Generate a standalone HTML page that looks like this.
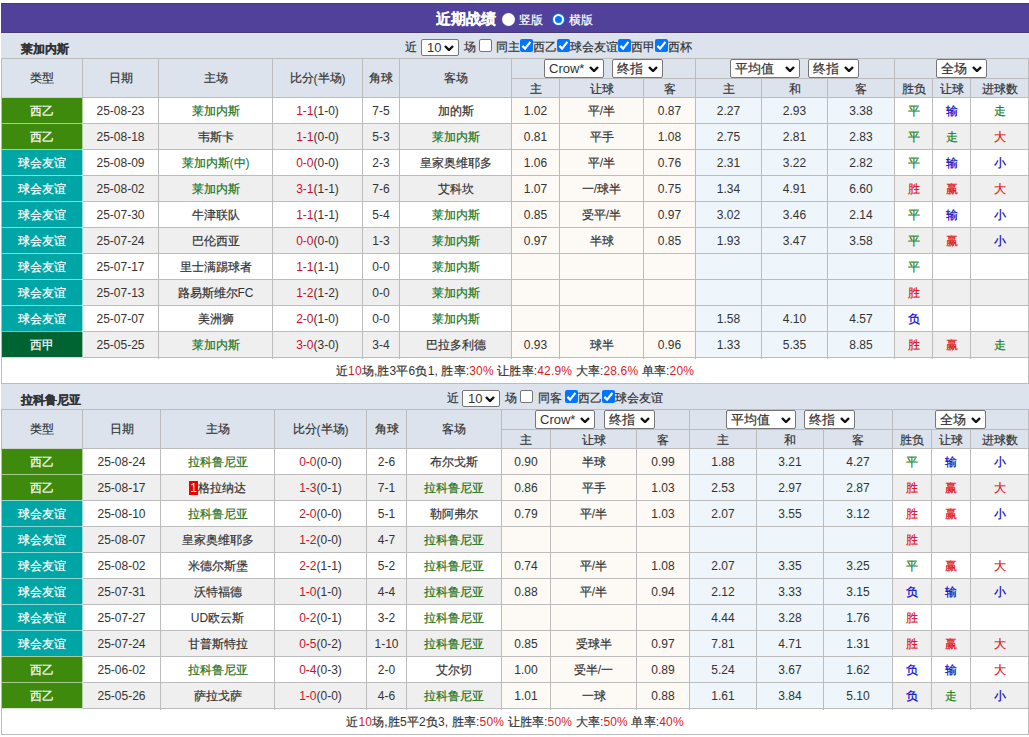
<!DOCTYPE html><html><head><meta charset="utf-8"><style>
html,body{margin:0;padding:0;background:#fff;}
body{width:1029px;height:737px;position:relative;overflow:hidden;font-family:"Liberation Sans",sans-serif;font-size:12px;color:#333;}
.r{position:absolute;}
.t{position:absolute;white-space:nowrap;}
.b{font-weight:bold;}
.c{position:absolute;box-sizing:border-box;padding-top:1px;display:flex;align-items:center;justify-content:center;white-space:nowrap;font-size:12px;}
.hd{color:#333;}
.cb{position:absolute;width:11px;height:11px;border:1px solid #767676;border-radius:2px;background:#fff;}
.cb.on{width:13px;height:13px;border:none;background:#0075ff;}
.cb svg{position:absolute;left:0;top:0;}
.sel{position:absolute;border:1px solid #767676;border-radius:2px;background:#fff;}
.red{color:#c8102e;}
.k{font-style:normal;-webkit-text-stroke:0.2px currentColor;}
.fr{color:#d41c1c;}
</style></head><body>

<div class="r" style="left:1px;top:3px;width:1028px;height:30px;background:#51419b;"></div>
<div class="r" style="left:1px;top:3px;width:1028px;height:1px;background:#45397c;"></div>
<div class="r" style="left:1px;top:32px;width:1028px;height:1px;background:#45397c;"></div>
<div class="t b" style="left:436px;top:3px;height:30px;line-height:31px;font-size:15px;color:#fff"><i class="k">近期战绩</i></div>
<div class="r" style="left:502px;top:13px;width:13px;height:13px;border-radius:50%;background:#fff"></div>
<div class="t" style="left:519px;top:5px;height:30px;line-height:31px;font-size:12px;color:#fff"><i class="k">竖版</i></div>
<div class="r" style="left:553px;top:14px;width:7px;height:7px;border-radius:50%;background:#0075ff;border:2px solid #fff;box-shadow:0 0 0 1px #0075ff"></div>
<div class="t" style="left:569px;top:5px;height:30px;line-height:31px;font-size:12px;color:#fff"><i class="k">横版</i></div>
<div class="r" style="left:1px;top:33px;width:1028px;height:25px;background:#dce3ed;"></div>
<div class="t b" style="left:21px;top:33px;height:25px;line-height:32px;font-size:12px"><i class="k">莱加内斯</i></div>
<div class="t" style="left:405px;top:33px;height:25px;line-height:29px;font-size:12px"><i class="k">近</i></div>
<div class="sel" style="left:421px;top:39px;width:36px;height:15px"></div>
<div class="t" style="left:427px;top:39px;height:17px;line-height:17px;font-size:13px;font-family:"Liberation Serif",serif;">10</div>
<svg class="r" style="left:444px;top:44.5px" width="10" height="6" viewBox="0 0 10 6"><path d="M1 1 L5 5 L9 1" fill="none" stroke="#111" stroke-width="2.4"/></svg>
<div class="t" style="left:464px;top:33px;height:25px;line-height:29px;font-size:12px"><i class="k">场</i></div>
<div class="cb" style="left:479px;top:39px"></div>
<div class="t" style="left:496px;top:33px;height:25px;line-height:29px;font-size:12px"><i class="k">同主</i></div>
<div class="cb on" style="left:520px;top:39px"><svg width="13" height="13" viewBox="0 0 13 13"><path d="M2.4 6.9 L5.1 9.6 L10.4 2.9" fill="none" stroke="#fff" stroke-width="2.2"/></svg></div>
<div class="t" style="left:533px;top:33px;height:25px;line-height:29px;font-size:12px"><i class="k">西乙</i></div>
<div class="cb on" style="left:557px;top:39px"><svg width="13" height="13" viewBox="0 0 13 13"><path d="M2.4 6.9 L5.1 9.6 L10.4 2.9" fill="none" stroke="#fff" stroke-width="2.2"/></svg></div>
<div class="t" style="left:570px;top:33px;height:25px;line-height:29px;font-size:12px"><i class="k">球会友谊</i></div>
<div class="cb on" style="left:618px;top:39px"><svg width="13" height="13" viewBox="0 0 13 13"><path d="M2.4 6.9 L5.1 9.6 L10.4 2.9" fill="none" stroke="#fff" stroke-width="2.2"/></svg></div>
<div class="t" style="left:631px;top:33px;height:25px;line-height:29px;font-size:12px"><i class="k">西甲</i></div>
<div class="cb on" style="left:655px;top:39px"><svg width="13" height="13" viewBox="0 0 13 13"><path d="M2.4 6.9 L5.1 9.6 L10.4 2.9" fill="none" stroke="#fff" stroke-width="2.2"/></svg></div>
<div class="t" style="left:668px;top:33px;height:25px;line-height:29px;font-size:12px"><i class="k">西杯</i></div>
<div class="r" style="left:1px;top:58px;width:1028px;height:39px;background:#dce3ed;"></div>
<div class="r" style="left:82px;top:98px;width:946px;height:25px;background:#ffffff;"></div>
<div class="r" style="left:512px;top:98px;width:183px;height:25px;background:#fdf9f5;"></div>
<div class="r" style="left:696px;top:98px;width:198px;height:25px;background:#eff6fb;"></div>
<div class="r" style="left:2px;top:97px;width:81px;height:27px;background:#3e8a0d;"></div>
<div class="r" style="left:82px;top:124px;width:946px;height:25px;background:#efefef;"></div>
<div class="r" style="left:512px;top:124px;width:183px;height:25px;background:#fdf9f5;"></div>
<div class="r" style="left:696px;top:124px;width:198px;height:25px;background:#eff6fb;"></div>
<div class="r" style="left:2px;top:123px;width:81px;height:27px;background:#3e8a0d;"></div>
<div class="r" style="left:82px;top:150px;width:946px;height:25px;background:#ffffff;"></div>
<div class="r" style="left:512px;top:150px;width:183px;height:25px;background:#fdf9f5;"></div>
<div class="r" style="left:696px;top:150px;width:198px;height:25px;background:#eff6fb;"></div>
<div class="r" style="left:2px;top:149px;width:81px;height:27px;background:#00a5a5;"></div>
<div class="r" style="left:82px;top:176px;width:946px;height:25px;background:#efefef;"></div>
<div class="r" style="left:512px;top:176px;width:183px;height:25px;background:#fdf9f5;"></div>
<div class="r" style="left:696px;top:176px;width:198px;height:25px;background:#eff6fb;"></div>
<div class="r" style="left:2px;top:175px;width:81px;height:27px;background:#00a5a5;"></div>
<div class="r" style="left:82px;top:202px;width:946px;height:25px;background:#ffffff;"></div>
<div class="r" style="left:512px;top:202px;width:183px;height:25px;background:#fdf9f5;"></div>
<div class="r" style="left:696px;top:202px;width:198px;height:25px;background:#eff6fb;"></div>
<div class="r" style="left:2px;top:201px;width:81px;height:27px;background:#00a5a5;"></div>
<div class="r" style="left:82px;top:228px;width:946px;height:25px;background:#efefef;"></div>
<div class="r" style="left:512px;top:228px;width:183px;height:25px;background:#fdf9f5;"></div>
<div class="r" style="left:696px;top:228px;width:198px;height:25px;background:#eff6fb;"></div>
<div class="r" style="left:2px;top:227px;width:81px;height:27px;background:#00a5a5;"></div>
<div class="r" style="left:82px;top:254px;width:946px;height:25px;background:#ffffff;"></div>
<div class="r" style="left:512px;top:254px;width:183px;height:25px;background:#fdf9f5;"></div>
<div class="r" style="left:696px;top:254px;width:198px;height:25px;background:#eff6fb;"></div>
<div class="r" style="left:2px;top:253px;width:81px;height:27px;background:#00a5a5;"></div>
<div class="r" style="left:82px;top:280px;width:946px;height:25px;background:#efefef;"></div>
<div class="r" style="left:512px;top:280px;width:183px;height:25px;background:#fdf9f5;"></div>
<div class="r" style="left:696px;top:280px;width:198px;height:25px;background:#eff6fb;"></div>
<div class="r" style="left:2px;top:279px;width:81px;height:27px;background:#00a5a5;"></div>
<div class="r" style="left:82px;top:306px;width:946px;height:25px;background:#ffffff;"></div>
<div class="r" style="left:512px;top:306px;width:183px;height:25px;background:#fdf9f5;"></div>
<div class="r" style="left:696px;top:306px;width:198px;height:25px;background:#eff6fb;"></div>
<div class="r" style="left:2px;top:305px;width:81px;height:27px;background:#00a5a5;"></div>
<div class="r" style="left:82px;top:332px;width:946px;height:25px;background:#efefef;"></div>
<div class="r" style="left:512px;top:332px;width:183px;height:25px;background:#fdf9f5;"></div>
<div class="r" style="left:696px;top:332px;width:198px;height:25px;background:#eff6fb;"></div>
<div class="r" style="left:2px;top:331px;width:81px;height:27px;background:#006432;"></div>
<div class="r" style="left:2px;top:358px;width:1026px;height:25px;background:#ffffff;"></div>
<div class="r" style="left:1px;top:58px;width:1028px;height:1px;background:#bcbcbc;"></div>
<div class="r" style="left:511px;top:78px;width:518px;height:1px;background:#bcbcbc;"></div>
<div class="r" style="left:82px;top:97px;width:947px;height:1px;background:#bcbcbc;"></div>
<div class="r" style="left:1px;top:97px;width:1px;height:1px;background:#bcbcbc;"></div>
<div class="r" style="left:2px;top:97px;width:80px;height:1px;background:#c9d3c9;"></div>
<div class="r" style="left:82px;top:123px;width:947px;height:1px;background:#bcbcbc;"></div>
<div class="r" style="left:82px;top:149px;width:947px;height:1px;background:#bcbcbc;"></div>
<div class="r" style="left:82px;top:175px;width:947px;height:1px;background:#bcbcbc;"></div>
<div class="r" style="left:82px;top:201px;width:947px;height:1px;background:#bcbcbc;"></div>
<div class="r" style="left:82px;top:227px;width:947px;height:1px;background:#bcbcbc;"></div>
<div class="r" style="left:82px;top:253px;width:947px;height:1px;background:#bcbcbc;"></div>
<div class="r" style="left:82px;top:279px;width:947px;height:1px;background:#bcbcbc;"></div>
<div class="r" style="left:82px;top:305px;width:947px;height:1px;background:#bcbcbc;"></div>
<div class="r" style="left:82px;top:331px;width:947px;height:1px;background:#bcbcbc;"></div>
<div class="r" style="left:82px;top:357px;width:947px;height:1px;background:#bcbcbc;"></div>
<div class="r" style="left:1px;top:383px;width:1028px;height:1px;background:#bcbcbc;"></div>
<div class="r" style="left:1px;top:58px;width:1px;height:40px;background:#bcbcbc;"></div>
<div class="r" style="left:82px;top:58px;width:1px;height:40px;background:#bcbcbc;"></div>
<div class="r" style="left:158px;top:58px;width:1px;height:40px;background:#bcbcbc;"></div>
<div class="r" style="left:272px;top:58px;width:1px;height:40px;background:#bcbcbc;"></div>
<div class="r" style="left:362px;top:58px;width:1px;height:40px;background:#bcbcbc;"></div>
<div class="r" style="left:399px;top:58px;width:1px;height:40px;background:#bcbcbc;"></div>
<div class="r" style="left:511px;top:58px;width:1px;height:40px;background:#bcbcbc;"></div>
<div class="r" style="left:695px;top:58px;width:1px;height:40px;background:#bcbcbc;"></div>
<div class="r" style="left:894px;top:58px;width:1px;height:40px;background:#bcbcbc;"></div>
<div class="r" style="left:1028px;top:58px;width:1px;height:40px;background:#bcbcbc;"></div>
<div class="r" style="left:559px;top:78px;width:1px;height:20px;background:#bcbcbc;"></div>
<div class="r" style="left:643px;top:78px;width:1px;height:20px;background:#bcbcbc;"></div>
<div class="r" style="left:761px;top:78px;width:1px;height:20px;background:#bcbcbc;"></div>
<div class="r" style="left:827px;top:78px;width:1px;height:20px;background:#bcbcbc;"></div>
<div class="r" style="left:932px;top:78px;width:1px;height:20px;background:#bcbcbc;"></div>
<div class="r" style="left:970px;top:78px;width:1px;height:20px;background:#bcbcbc;"></div>
<div class="r" style="left:1px;top:97px;width:1px;height:287px;background:#bcbcbc;"></div>
<div class="r" style="left:1028px;top:97px;width:1px;height:287px;background:#bcbcbc;"></div>
<div class="r" style="left:158px;top:97px;width:1px;height:262px;background:#bcbcbc;"></div>
<div class="r" style="left:272px;top:97px;width:1px;height:262px;background:#bcbcbc;"></div>
<div class="r" style="left:362px;top:97px;width:1px;height:262px;background:#bcbcbc;"></div>
<div class="r" style="left:399px;top:97px;width:1px;height:262px;background:#bcbcbc;"></div>
<div class="r" style="left:511px;top:97px;width:1px;height:262px;background:#bcbcbc;"></div>
<div class="r" style="left:559px;top:97px;width:1px;height:262px;background:#bcbcbc;"></div>
<div class="r" style="left:643px;top:97px;width:1px;height:262px;background:#bcbcbc;"></div>
<div class="r" style="left:695px;top:97px;width:1px;height:262px;background:#bcbcbc;"></div>
<div class="r" style="left:761px;top:97px;width:1px;height:262px;background:#bcbcbc;"></div>
<div class="r" style="left:827px;top:97px;width:1px;height:262px;background:#bcbcbc;"></div>
<div class="r" style="left:894px;top:97px;width:1px;height:262px;background:#bcbcbc;"></div>
<div class="r" style="left:932px;top:97px;width:1px;height:262px;background:#bcbcbc;"></div>
<div class="r" style="left:970px;top:97px;width:1px;height:262px;background:#bcbcbc;"></div>
<div class="r" style="left:2px;top:123px;width:80px;height:1px;background:rgba(255,255,255,0.55);"></div>
<div class="r" style="left:2px;top:149px;width:80px;height:1px;background:rgba(255,255,255,0.55);"></div>
<div class="r" style="left:2px;top:175px;width:80px;height:1px;background:rgba(255,255,255,0.55);"></div>
<div class="r" style="left:2px;top:201px;width:80px;height:1px;background:rgba(255,255,255,0.55);"></div>
<div class="r" style="left:2px;top:227px;width:80px;height:1px;background:rgba(255,255,255,0.55);"></div>
<div class="r" style="left:2px;top:253px;width:80px;height:1px;background:rgba(255,255,255,0.55);"></div>
<div class="r" style="left:2px;top:279px;width:80px;height:1px;background:rgba(255,255,255,0.55);"></div>
<div class="r" style="left:2px;top:305px;width:80px;height:1px;background:rgba(255,255,255,0.55);"></div>
<div class="r" style="left:2px;top:331px;width:80px;height:1px;background:rgba(255,255,255,0.55);"></div>
<div class="r" style="left:2px;top:357px;width:80px;height:1px;background:rgba(255,255,255,0.8);"></div>
<div class="r" style="left:2px;top:358px;width:80px;height:1px;background:rgba(255,255,255,0.0);"></div>
<div class="r" style="left:82px;top:98px;width:1px;height:260px;background:rgba(255,255,255,0.6);"></div>
<div class="c hd" style="left:2px;top:59px;width:80px;height:38px;"><i class="k">类型</i></div>
<div class="c hd" style="left:83px;top:59px;width:75px;height:38px;"><i class="k">日期</i></div>
<div class="c hd" style="left:159px;top:59px;width:113px;height:38px;"><i class="k">主场</i></div>
<div class="c hd" style="left:273px;top:59px;width:89px;height:38px;"><i class="k">比分</i>(<i class="k">半场</i>)</div>
<div class="c hd" style="left:363px;top:59px;width:36px;height:38px;"><i class="k">角球</i></div>
<div class="c hd" style="left:400px;top:59px;width:111px;height:38px;"><i class="k">客场</i></div>
<div class="c hd" style="left:512px;top:79px;width:47px;height:18px;padding-top:2px;"><i class="k">主</i></div>
<div class="c hd" style="left:560px;top:79px;width:83px;height:18px;padding-top:2px;"><i class="k">让球</i></div>
<div class="c hd" style="left:644px;top:79px;width:51px;height:18px;padding-top:2px;"><i class="k">客</i></div>
<div class="c hd" style="left:696px;top:79px;width:65px;height:18px;padding-top:2px;"><i class="k">主</i></div>
<div class="c hd" style="left:762px;top:79px;width:65px;height:18px;padding-top:2px;"><i class="k">和</i></div>
<div class="c hd" style="left:828px;top:79px;width:66px;height:18px;padding-top:2px;"><i class="k">客</i></div>
<div class="c hd" style="left:895px;top:79px;width:37px;height:18px;padding-top:2px;"><i class="k">胜负</i></div>
<div class="c hd" style="left:933px;top:79px;width:37px;height:18px;padding-top:2px;"><i class="k">让球</i></div>
<div class="c hd" style="left:971px;top:79px;width:57px;height:18px;padding-top:2px;"><i class="k">进球数</i></div>
<div class="c" style="left:2px;top:98px;width:80px;height:25px;color:#fff;font-size:12px;"><i class="k">西乙</i></div>
<div class="c" style="left:83px;top:98px;width:75px;height:25px;">25-08-23</div>
<div class="c" style="left:159px;top:98px;width:113px;height:25px;color:#1e741e;"><i class="k">莱加内斯</i></div>
<div class="c" style="left:273px;top:98px;width:89px;height:25px;"><span class="red">1-1</span>(1-0)</div>
<div class="c" style="left:363px;top:98px;width:36px;height:25px;">7-5</div>
<div class="c" style="left:400px;top:98px;width:111px;height:25px;"><i class="k">加的斯</i></div>
<div class="c" style="left:512px;top:98px;width:47px;height:25px;">1.02</div>
<div class="c" style="left:560px;top:98px;width:83px;height:25px;"><i class="k">平</i>/<i class="k">半</i></div>
<div class="c" style="left:644px;top:98px;width:51px;height:25px;">0.87</div>
<div class="c" style="left:696px;top:98px;width:65px;height:25px;">2.27</div>
<div class="c" style="left:762px;top:98px;width:65px;height:25px;">2.93</div>
<div class="c" style="left:828px;top:98px;width:66px;height:25px;">3.38</div>
<div class="c" style="left:895px;top:98px;width:37px;height:25px;color:#1a801a;"><i class="k">平</i></div>
<div class="c" style="left:933px;top:98px;width:37px;height:25px;color:#0000c0;"><i class="k">输</i></div>
<div class="c" style="left:971px;top:98px;width:57px;height:25px;color:#1a801a;"><i class="k">走</i></div>
<div class="c" style="left:2px;top:124px;width:80px;height:25px;color:#fff;font-size:12px;"><i class="k">西乙</i></div>
<div class="c" style="left:83px;top:124px;width:75px;height:25px;">25-08-18</div>
<div class="c" style="left:159px;top:124px;width:113px;height:25px;"><i class="k">韦斯卡</i></div>
<div class="c" style="left:273px;top:124px;width:89px;height:25px;"><span class="red">1-1</span>(0-0)</div>
<div class="c" style="left:363px;top:124px;width:36px;height:25px;">5-3</div>
<div class="c" style="left:400px;top:124px;width:111px;height:25px;color:#1e741e;"><i class="k">莱加内斯</i></div>
<div class="c" style="left:512px;top:124px;width:47px;height:25px;">0.81</div>
<div class="c" style="left:560px;top:124px;width:83px;height:25px;"><i class="k">平手</i></div>
<div class="c" style="left:644px;top:124px;width:51px;height:25px;">1.08</div>
<div class="c" style="left:696px;top:124px;width:65px;height:25px;">2.75</div>
<div class="c" style="left:762px;top:124px;width:65px;height:25px;">2.81</div>
<div class="c" style="left:828px;top:124px;width:66px;height:25px;">2.83</div>
<div class="c" style="left:895px;top:124px;width:37px;height:25px;color:#1a801a;"><i class="k">平</i></div>
<div class="c" style="left:933px;top:124px;width:37px;height:25px;color:#1a801a;"><i class="k">走</i></div>
<div class="c" style="left:971px;top:124px;width:57px;height:25px;color:#e01010;"><i class="k">大</i></div>
<div class="c" style="left:2px;top:150px;width:80px;height:25px;color:#fff;font-size:12px;"><i class="k">球会友谊</i></div>
<div class="c" style="left:83px;top:150px;width:75px;height:25px;">25-08-09</div>
<div class="c" style="left:159px;top:150px;width:113px;height:25px;color:#1e741e;"><i class="k">莱加内斯</i>(<i class="k">中</i>)</div>
<div class="c" style="left:273px;top:150px;width:89px;height:25px;"><span class="red">0-0</span>(0-0)</div>
<div class="c" style="left:363px;top:150px;width:36px;height:25px;">2-3</div>
<div class="c" style="left:400px;top:150px;width:111px;height:25px;"><i class="k">皇家奥维耶多</i></div>
<div class="c" style="left:512px;top:150px;width:47px;height:25px;">1.06</div>
<div class="c" style="left:560px;top:150px;width:83px;height:25px;"><i class="k">平</i>/<i class="k">半</i></div>
<div class="c" style="left:644px;top:150px;width:51px;height:25px;">0.76</div>
<div class="c" style="left:696px;top:150px;width:65px;height:25px;">2.31</div>
<div class="c" style="left:762px;top:150px;width:65px;height:25px;">3.22</div>
<div class="c" style="left:828px;top:150px;width:66px;height:25px;">2.82</div>
<div class="c" style="left:895px;top:150px;width:37px;height:25px;color:#1a801a;"><i class="k">平</i></div>
<div class="c" style="left:933px;top:150px;width:37px;height:25px;color:#0000c0;"><i class="k">输</i></div>
<div class="c" style="left:971px;top:150px;width:57px;height:25px;color:#0000c0;"><i class="k">小</i></div>
<div class="c" style="left:2px;top:176px;width:80px;height:25px;color:#fff;font-size:12px;"><i class="k">球会友谊</i></div>
<div class="c" style="left:83px;top:176px;width:75px;height:25px;">25-08-02</div>
<div class="c" style="left:159px;top:176px;width:113px;height:25px;color:#1e741e;"><i class="k">莱加内斯</i></div>
<div class="c" style="left:273px;top:176px;width:89px;height:25px;"><span class="red">3-1</span>(1-1)</div>
<div class="c" style="left:363px;top:176px;width:36px;height:25px;">7-6</div>
<div class="c" style="left:400px;top:176px;width:111px;height:25px;"><i class="k">艾科坎</i></div>
<div class="c" style="left:512px;top:176px;width:47px;height:25px;">1.07</div>
<div class="c" style="left:560px;top:176px;width:83px;height:25px;"><i class="k">一</i>/<i class="k">球半</i></div>
<div class="c" style="left:644px;top:176px;width:51px;height:25px;">0.75</div>
<div class="c" style="left:696px;top:176px;width:65px;height:25px;">1.34</div>
<div class="c" style="left:762px;top:176px;width:65px;height:25px;">4.91</div>
<div class="c" style="left:828px;top:176px;width:66px;height:25px;">6.60</div>
<div class="c" style="left:895px;top:176px;width:37px;height:25px;color:#e01010;"><i class="k">胜</i></div>
<div class="c" style="left:933px;top:176px;width:37px;height:25px;color:#e01010;"><i class="k">赢</i></div>
<div class="c" style="left:971px;top:176px;width:57px;height:25px;color:#e01010;"><i class="k">大</i></div>
<div class="c" style="left:2px;top:202px;width:80px;height:25px;color:#fff;font-size:12px;"><i class="k">球会友谊</i></div>
<div class="c" style="left:83px;top:202px;width:75px;height:25px;">25-07-30</div>
<div class="c" style="left:159px;top:202px;width:113px;height:25px;"><i class="k">牛津联队</i></div>
<div class="c" style="left:273px;top:202px;width:89px;height:25px;"><span class="red">1-1</span>(1-1)</div>
<div class="c" style="left:363px;top:202px;width:36px;height:25px;">5-4</div>
<div class="c" style="left:400px;top:202px;width:111px;height:25px;color:#1e741e;"><i class="k">莱加内斯</i></div>
<div class="c" style="left:512px;top:202px;width:47px;height:25px;">0.85</div>
<div class="c" style="left:560px;top:202px;width:83px;height:25px;"><i class="k">受平</i>/<i class="k">半</i></div>
<div class="c" style="left:644px;top:202px;width:51px;height:25px;">0.97</div>
<div class="c" style="left:696px;top:202px;width:65px;height:25px;">3.02</div>
<div class="c" style="left:762px;top:202px;width:65px;height:25px;">3.46</div>
<div class="c" style="left:828px;top:202px;width:66px;height:25px;">2.14</div>
<div class="c" style="left:895px;top:202px;width:37px;height:25px;color:#1a801a;"><i class="k">平</i></div>
<div class="c" style="left:933px;top:202px;width:37px;height:25px;color:#0000c0;"><i class="k">输</i></div>
<div class="c" style="left:971px;top:202px;width:57px;height:25px;color:#0000c0;"><i class="k">小</i></div>
<div class="c" style="left:2px;top:228px;width:80px;height:25px;color:#fff;font-size:12px;"><i class="k">球会友谊</i></div>
<div class="c" style="left:83px;top:228px;width:75px;height:25px;">25-07-24</div>
<div class="c" style="left:159px;top:228px;width:113px;height:25px;"><i class="k">巴伦西亚</i></div>
<div class="c" style="left:273px;top:228px;width:89px;height:25px;"><span class="red">0-0</span>(0-0)</div>
<div class="c" style="left:363px;top:228px;width:36px;height:25px;">1-3</div>
<div class="c" style="left:400px;top:228px;width:111px;height:25px;color:#1e741e;"><i class="k">莱加内斯</i></div>
<div class="c" style="left:512px;top:228px;width:47px;height:25px;">0.97</div>
<div class="c" style="left:560px;top:228px;width:83px;height:25px;"><i class="k">半球</i></div>
<div class="c" style="left:644px;top:228px;width:51px;height:25px;">0.85</div>
<div class="c" style="left:696px;top:228px;width:65px;height:25px;">1.93</div>
<div class="c" style="left:762px;top:228px;width:65px;height:25px;">3.47</div>
<div class="c" style="left:828px;top:228px;width:66px;height:25px;">3.58</div>
<div class="c" style="left:895px;top:228px;width:37px;height:25px;color:#1a801a;"><i class="k">平</i></div>
<div class="c" style="left:933px;top:228px;width:37px;height:25px;color:#e01010;"><i class="k">赢</i></div>
<div class="c" style="left:971px;top:228px;width:57px;height:25px;color:#0000c0;"><i class="k">小</i></div>
<div class="c" style="left:2px;top:254px;width:80px;height:25px;color:#fff;font-size:12px;"><i class="k">球会友谊</i></div>
<div class="c" style="left:83px;top:254px;width:75px;height:25px;">25-07-17</div>
<div class="c" style="left:159px;top:254px;width:113px;height:25px;"><i class="k">里士满踢球者</i></div>
<div class="c" style="left:273px;top:254px;width:89px;height:25px;"><span class="red">1-1</span>(1-1)</div>
<div class="c" style="left:363px;top:254px;width:36px;height:25px;">0-0</div>
<div class="c" style="left:400px;top:254px;width:111px;height:25px;color:#1e741e;"><i class="k">莱加内斯</i></div>
<div class="c" style="left:895px;top:254px;width:37px;height:25px;color:#1a801a;"><i class="k">平</i></div>
<div class="c" style="left:2px;top:280px;width:80px;height:25px;color:#fff;font-size:12px;"><i class="k">球会友谊</i></div>
<div class="c" style="left:83px;top:280px;width:75px;height:25px;">25-07-13</div>
<div class="c" style="left:159px;top:280px;width:113px;height:25px;"><i class="k">路易斯维尔</i>FC</div>
<div class="c" style="left:273px;top:280px;width:89px;height:25px;"><span class="red">1-2</span>(1-2)</div>
<div class="c" style="left:363px;top:280px;width:36px;height:25px;">0-0</div>
<div class="c" style="left:400px;top:280px;width:111px;height:25px;color:#1e741e;"><i class="k">莱加内斯</i></div>
<div class="c" style="left:895px;top:280px;width:37px;height:25px;color:#e01010;"><i class="k">胜</i></div>
<div class="c" style="left:2px;top:306px;width:80px;height:25px;color:#fff;font-size:12px;"><i class="k">球会友谊</i></div>
<div class="c" style="left:83px;top:306px;width:75px;height:25px;">25-07-07</div>
<div class="c" style="left:159px;top:306px;width:113px;height:25px;"><i class="k">美洲狮</i></div>
<div class="c" style="left:273px;top:306px;width:89px;height:25px;"><span class="red">2-0</span>(1-0)</div>
<div class="c" style="left:363px;top:306px;width:36px;height:25px;">0-0</div>
<div class="c" style="left:400px;top:306px;width:111px;height:25px;color:#1e741e;"><i class="k">莱加内斯</i></div>
<div class="c" style="left:696px;top:306px;width:65px;height:25px;">1.58</div>
<div class="c" style="left:762px;top:306px;width:65px;height:25px;">4.10</div>
<div class="c" style="left:828px;top:306px;width:66px;height:25px;">4.57</div>
<div class="c" style="left:895px;top:306px;width:37px;height:25px;color:#0000d0;"><i class="k">负</i></div>
<div class="c" style="left:2px;top:332px;width:80px;height:25px;color:#fff;font-size:12px;"><i class="k">西甲</i></div>
<div class="c" style="left:83px;top:332px;width:75px;height:25px;">25-05-25</div>
<div class="c" style="left:159px;top:332px;width:113px;height:25px;color:#1e741e;"><i class="k">莱加内斯</i></div>
<div class="c" style="left:273px;top:332px;width:89px;height:25px;"><span class="red">3-0</span>(3-0)</div>
<div class="c" style="left:363px;top:332px;width:36px;height:25px;">3-4</div>
<div class="c" style="left:400px;top:332px;width:111px;height:25px;"><i class="k">巴拉多利德</i></div>
<div class="c" style="left:512px;top:332px;width:47px;height:25px;">0.93</div>
<div class="c" style="left:560px;top:332px;width:83px;height:25px;"><i class="k">球半</i></div>
<div class="c" style="left:644px;top:332px;width:51px;height:25px;">0.96</div>
<div class="c" style="left:696px;top:332px;width:65px;height:25px;">1.33</div>
<div class="c" style="left:762px;top:332px;width:65px;height:25px;">5.35</div>
<div class="c" style="left:828px;top:332px;width:66px;height:25px;">8.85</div>
<div class="c" style="left:895px;top:332px;width:37px;height:25px;color:#e01010;"><i class="k">胜</i></div>
<div class="c" style="left:933px;top:332px;width:37px;height:25px;color:#e01010;"><i class="k">赢</i></div>
<div class="c" style="left:971px;top:332px;width:57px;height:25px;color:#1a801a;"><i class="k">走</i></div>
<div class="c" style="left:2px;top:358px;width:1026px;height:25px;"><span style="white-space:pre;letter-spacing:0.16px"><i class="k">近</i><span class="fr">10</span><i class="k">场</i>,<i class="k">胜</i>3<i class="k">平</i>6<i class="k">负</i>1, <i class="k">胜率</i>:<span class="fr">30%</span> <i class="k">让胜率</i>:<span class="fr">42.9%</span> <i class="k">大率</i>:<span class="fr">28.6%</span> <i class="k">单率</i>:<span class="fr">20%</span></span></div>
<div class="sel" style="left:544px;top:59px;width:58px;height:17px"></div>
<div class="t" style="left:549px;top:59px;height:19px;line-height:19px;font-size:13px;">Crow*</div>
<svg class="r" style="left:589px;top:65.5px" width="10" height="6" viewBox="0 0 10 6"><path d="M1 1 L5 5 L9 1" fill="none" stroke="#111" stroke-width="2.4"/></svg>
<div class="sel" style="left:612px;top:59px;width:49px;height:17px"></div>
<div class="t" style="left:617px;top:59px;height:19px;line-height:19px;font-size:13px;"><i class="k">终指</i></div>
<svg class="r" style="left:648px;top:65.5px" width="10" height="6" viewBox="0 0 10 6"><path d="M1 1 L5 5 L9 1" fill="none" stroke="#111" stroke-width="2.4"/></svg>
<div class="sel" style="left:730px;top:59px;width:68px;height:17px"></div>
<div class="t" style="left:735px;top:59px;height:19px;line-height:19px;font-size:13px;"><i class="k">平均值</i></div>
<svg class="r" style="left:785px;top:65.5px" width="10" height="6" viewBox="0 0 10 6"><path d="M1 1 L5 5 L9 1" fill="none" stroke="#111" stroke-width="2.4"/></svg>
<div class="sel" style="left:808px;top:59px;width:49px;height:17px"></div>
<div class="t" style="left:813px;top:59px;height:19px;line-height:19px;font-size:13px;"><i class="k">终指</i></div>
<svg class="r" style="left:844px;top:65.5px" width="10" height="6" viewBox="0 0 10 6"><path d="M1 1 L5 5 L9 1" fill="none" stroke="#111" stroke-width="2.4"/></svg>
<div class="sel" style="left:936px;top:59px;width:49px;height:17px"></div>
<div class="t" style="left:941px;top:59px;height:19px;line-height:19px;font-size:13px;"><i class="k">全场</i></div>
<svg class="r" style="left:972px;top:65.5px" width="10" height="6" viewBox="0 0 10 6"><path d="M1 1 L5 5 L9 1" fill="none" stroke="#111" stroke-width="2.4"/></svg>
<div class="r" style="left:1px;top:384px;width:1028px;height:25px;background:#dce3ed;"></div>
<div class="t b" style="left:21px;top:384px;height:25px;line-height:32px;font-size:12px"><i class="k">拉科鲁尼亚</i></div>
<div class="t" style="left:447px;top:384px;height:25px;line-height:29px;font-size:12px"><i class="k">近</i></div>
<div class="sel" style="left:462px;top:390px;width:36px;height:15px"></div>
<div class="t" style="left:468px;top:390px;height:17px;line-height:17px;font-size:13px;font-family:"Liberation Serif",serif;">10</div>
<svg class="r" style="left:485px;top:395.5px" width="10" height="6" viewBox="0 0 10 6"><path d="M1 1 L5 5 L9 1" fill="none" stroke="#111" stroke-width="2.4"/></svg>
<div class="t" style="left:505px;top:384px;height:25px;line-height:29px;font-size:12px"><i class="k">场</i></div>
<div class="cb" style="left:520px;top:390px"></div>
<div class="t" style="left:538px;top:384px;height:25px;line-height:29px;font-size:12px"><i class="k">同客</i></div>
<div class="cb on" style="left:565px;top:390px"><svg width="13" height="13" viewBox="0 0 13 13"><path d="M2.4 6.9 L5.1 9.6 L10.4 2.9" fill="none" stroke="#fff" stroke-width="2.2"/></svg></div>
<div class="t" style="left:578px;top:384px;height:25px;line-height:29px;font-size:12px"><i class="k">西乙</i></div>
<div class="cb on" style="left:602px;top:390px"><svg width="13" height="13" viewBox="0 0 13 13"><path d="M2.4 6.9 L5.1 9.6 L10.4 2.9" fill="none" stroke="#fff" stroke-width="2.2"/></svg></div>
<div class="t" style="left:615px;top:384px;height:25px;line-height:29px;font-size:12px"><i class="k">球会友谊</i></div>
<div class="r" style="left:1px;top:409px;width:1028px;height:39px;background:#dce3ed;"></div>
<div class="r" style="left:82px;top:449px;width:946px;height:25px;background:#ffffff;"></div>
<div class="r" style="left:502px;top:449px;width:187px;height:25px;background:#fdf9f5;"></div>
<div class="r" style="left:690px;top:449px;width:202px;height:25px;background:#eff6fb;"></div>
<div class="r" style="left:2px;top:448px;width:81px;height:27px;background:#3e8a0d;"></div>
<div class="r" style="left:82px;top:475px;width:946px;height:25px;background:#efefef;"></div>
<div class="r" style="left:502px;top:475px;width:187px;height:25px;background:#fdf9f5;"></div>
<div class="r" style="left:690px;top:475px;width:202px;height:25px;background:#eff6fb;"></div>
<div class="r" style="left:2px;top:474px;width:81px;height:27px;background:#3e8a0d;"></div>
<div class="r" style="left:82px;top:501px;width:946px;height:25px;background:#ffffff;"></div>
<div class="r" style="left:502px;top:501px;width:187px;height:25px;background:#fdf9f5;"></div>
<div class="r" style="left:690px;top:501px;width:202px;height:25px;background:#eff6fb;"></div>
<div class="r" style="left:2px;top:500px;width:81px;height:27px;background:#00a5a5;"></div>
<div class="r" style="left:82px;top:527px;width:946px;height:25px;background:#efefef;"></div>
<div class="r" style="left:502px;top:527px;width:187px;height:25px;background:#fdf9f5;"></div>
<div class="r" style="left:690px;top:527px;width:202px;height:25px;background:#eff6fb;"></div>
<div class="r" style="left:2px;top:526px;width:81px;height:27px;background:#00a5a5;"></div>
<div class="r" style="left:82px;top:553px;width:946px;height:25px;background:#ffffff;"></div>
<div class="r" style="left:502px;top:553px;width:187px;height:25px;background:#fdf9f5;"></div>
<div class="r" style="left:690px;top:553px;width:202px;height:25px;background:#eff6fb;"></div>
<div class="r" style="left:2px;top:552px;width:81px;height:27px;background:#00a5a5;"></div>
<div class="r" style="left:82px;top:579px;width:946px;height:25px;background:#efefef;"></div>
<div class="r" style="left:502px;top:579px;width:187px;height:25px;background:#fdf9f5;"></div>
<div class="r" style="left:690px;top:579px;width:202px;height:25px;background:#eff6fb;"></div>
<div class="r" style="left:2px;top:578px;width:81px;height:27px;background:#00a5a5;"></div>
<div class="r" style="left:82px;top:605px;width:946px;height:25px;background:#ffffff;"></div>
<div class="r" style="left:502px;top:605px;width:187px;height:25px;background:#fdf9f5;"></div>
<div class="r" style="left:690px;top:605px;width:202px;height:25px;background:#eff6fb;"></div>
<div class="r" style="left:2px;top:604px;width:81px;height:27px;background:#00a5a5;"></div>
<div class="r" style="left:82px;top:631px;width:946px;height:25px;background:#efefef;"></div>
<div class="r" style="left:502px;top:631px;width:187px;height:25px;background:#fdf9f5;"></div>
<div class="r" style="left:690px;top:631px;width:202px;height:25px;background:#eff6fb;"></div>
<div class="r" style="left:2px;top:630px;width:81px;height:27px;background:#00a5a5;"></div>
<div class="r" style="left:82px;top:657px;width:946px;height:25px;background:#ffffff;"></div>
<div class="r" style="left:502px;top:657px;width:187px;height:25px;background:#fdf9f5;"></div>
<div class="r" style="left:690px;top:657px;width:202px;height:25px;background:#eff6fb;"></div>
<div class="r" style="left:2px;top:656px;width:81px;height:27px;background:#3e8a0d;"></div>
<div class="r" style="left:82px;top:683px;width:946px;height:25px;background:#efefef;"></div>
<div class="r" style="left:502px;top:683px;width:187px;height:25px;background:#fdf9f5;"></div>
<div class="r" style="left:690px;top:683px;width:202px;height:25px;background:#eff6fb;"></div>
<div class="r" style="left:2px;top:682px;width:81px;height:27px;background:#3e8a0d;"></div>
<div class="r" style="left:2px;top:709px;width:1026px;height:25px;background:#ffffff;"></div>
<div class="r" style="left:1px;top:409px;width:1028px;height:1px;background:#bcbcbc;"></div>
<div class="r" style="left:501px;top:429px;width:528px;height:1px;background:#bcbcbc;"></div>
<div class="r" style="left:82px;top:448px;width:947px;height:1px;background:#bcbcbc;"></div>
<div class="r" style="left:1px;top:448px;width:1px;height:1px;background:#bcbcbc;"></div>
<div class="r" style="left:2px;top:448px;width:80px;height:1px;background:#c9d3c9;"></div>
<div class="r" style="left:82px;top:474px;width:947px;height:1px;background:#bcbcbc;"></div>
<div class="r" style="left:82px;top:500px;width:947px;height:1px;background:#bcbcbc;"></div>
<div class="r" style="left:82px;top:526px;width:947px;height:1px;background:#bcbcbc;"></div>
<div class="r" style="left:82px;top:552px;width:947px;height:1px;background:#bcbcbc;"></div>
<div class="r" style="left:82px;top:578px;width:947px;height:1px;background:#bcbcbc;"></div>
<div class="r" style="left:82px;top:604px;width:947px;height:1px;background:#bcbcbc;"></div>
<div class="r" style="left:82px;top:630px;width:947px;height:1px;background:#bcbcbc;"></div>
<div class="r" style="left:82px;top:656px;width:947px;height:1px;background:#bcbcbc;"></div>
<div class="r" style="left:82px;top:682px;width:947px;height:1px;background:#bcbcbc;"></div>
<div class="r" style="left:82px;top:708px;width:947px;height:1px;background:#bcbcbc;"></div>
<div class="r" style="left:1px;top:734px;width:1028px;height:1px;background:#bcbcbc;"></div>
<div class="r" style="left:1px;top:409px;width:1px;height:40px;background:#bcbcbc;"></div>
<div class="r" style="left:82px;top:409px;width:1px;height:40px;background:#bcbcbc;"></div>
<div class="r" style="left:160px;top:409px;width:1px;height:40px;background:#bcbcbc;"></div>
<div class="r" style="left:274px;top:409px;width:1px;height:40px;background:#bcbcbc;"></div>
<div class="r" style="left:366px;top:409px;width:1px;height:40px;background:#bcbcbc;"></div>
<div class="r" style="left:406px;top:409px;width:1px;height:40px;background:#bcbcbc;"></div>
<div class="r" style="left:501px;top:409px;width:1px;height:40px;background:#bcbcbc;"></div>
<div class="r" style="left:689px;top:409px;width:1px;height:40px;background:#bcbcbc;"></div>
<div class="r" style="left:892px;top:409px;width:1px;height:40px;background:#bcbcbc;"></div>
<div class="r" style="left:1028px;top:409px;width:1px;height:40px;background:#bcbcbc;"></div>
<div class="r" style="left:550px;top:429px;width:1px;height:20px;background:#bcbcbc;"></div>
<div class="r" style="left:636px;top:429px;width:1px;height:20px;background:#bcbcbc;"></div>
<div class="r" style="left:756px;top:429px;width:1px;height:20px;background:#bcbcbc;"></div>
<div class="r" style="left:823px;top:429px;width:1px;height:20px;background:#bcbcbc;"></div>
<div class="r" style="left:931px;top:429px;width:1px;height:20px;background:#bcbcbc;"></div>
<div class="r" style="left:970px;top:429px;width:1px;height:20px;background:#bcbcbc;"></div>
<div class="r" style="left:1px;top:448px;width:1px;height:287px;background:#bcbcbc;"></div>
<div class="r" style="left:1028px;top:448px;width:1px;height:287px;background:#bcbcbc;"></div>
<div class="r" style="left:160px;top:448px;width:1px;height:262px;background:#bcbcbc;"></div>
<div class="r" style="left:274px;top:448px;width:1px;height:262px;background:#bcbcbc;"></div>
<div class="r" style="left:366px;top:448px;width:1px;height:262px;background:#bcbcbc;"></div>
<div class="r" style="left:406px;top:448px;width:1px;height:262px;background:#bcbcbc;"></div>
<div class="r" style="left:501px;top:448px;width:1px;height:262px;background:#bcbcbc;"></div>
<div class="r" style="left:550px;top:448px;width:1px;height:262px;background:#bcbcbc;"></div>
<div class="r" style="left:636px;top:448px;width:1px;height:262px;background:#bcbcbc;"></div>
<div class="r" style="left:689px;top:448px;width:1px;height:262px;background:#bcbcbc;"></div>
<div class="r" style="left:756px;top:448px;width:1px;height:262px;background:#bcbcbc;"></div>
<div class="r" style="left:823px;top:448px;width:1px;height:262px;background:#bcbcbc;"></div>
<div class="r" style="left:892px;top:448px;width:1px;height:262px;background:#bcbcbc;"></div>
<div class="r" style="left:931px;top:448px;width:1px;height:262px;background:#bcbcbc;"></div>
<div class="r" style="left:970px;top:448px;width:1px;height:262px;background:#bcbcbc;"></div>
<div class="r" style="left:2px;top:474px;width:80px;height:1px;background:rgba(255,255,255,0.55);"></div>
<div class="r" style="left:2px;top:500px;width:80px;height:1px;background:rgba(255,255,255,0.55);"></div>
<div class="r" style="left:2px;top:526px;width:80px;height:1px;background:rgba(255,255,255,0.55);"></div>
<div class="r" style="left:2px;top:552px;width:80px;height:1px;background:rgba(255,255,255,0.55);"></div>
<div class="r" style="left:2px;top:578px;width:80px;height:1px;background:rgba(255,255,255,0.55);"></div>
<div class="r" style="left:2px;top:604px;width:80px;height:1px;background:rgba(255,255,255,0.55);"></div>
<div class="r" style="left:2px;top:630px;width:80px;height:1px;background:rgba(255,255,255,0.55);"></div>
<div class="r" style="left:2px;top:656px;width:80px;height:1px;background:rgba(255,255,255,0.55);"></div>
<div class="r" style="left:2px;top:682px;width:80px;height:1px;background:rgba(255,255,255,0.55);"></div>
<div class="r" style="left:2px;top:708px;width:80px;height:1px;background:rgba(255,255,255,0.8);"></div>
<div class="r" style="left:2px;top:709px;width:80px;height:1px;background:rgba(255,255,255,0.0);"></div>
<div class="r" style="left:82px;top:449px;width:1px;height:260px;background:rgba(255,255,255,0.6);"></div>
<div class="c hd" style="left:2px;top:410px;width:80px;height:38px;"><i class="k">类型</i></div>
<div class="c hd" style="left:83px;top:410px;width:77px;height:38px;"><i class="k">日期</i></div>
<div class="c hd" style="left:161px;top:410px;width:113px;height:38px;"><i class="k">主场</i></div>
<div class="c hd" style="left:275px;top:410px;width:91px;height:38px;"><i class="k">比分</i>(<i class="k">半场</i>)</div>
<div class="c hd" style="left:367px;top:410px;width:39px;height:38px;"><i class="k">角球</i></div>
<div class="c hd" style="left:407px;top:410px;width:94px;height:38px;"><i class="k">客场</i></div>
<div class="c hd" style="left:502px;top:430px;width:48px;height:18px;padding-top:2px;"><i class="k">主</i></div>
<div class="c hd" style="left:551px;top:430px;width:85px;height:18px;padding-top:2px;"><i class="k">让球</i></div>
<div class="c hd" style="left:637px;top:430px;width:52px;height:18px;padding-top:2px;"><i class="k">客</i></div>
<div class="c hd" style="left:690px;top:430px;width:66px;height:18px;padding-top:2px;"><i class="k">主</i></div>
<div class="c hd" style="left:757px;top:430px;width:66px;height:18px;padding-top:2px;"><i class="k">和</i></div>
<div class="c hd" style="left:824px;top:430px;width:68px;height:18px;padding-top:2px;"><i class="k">客</i></div>
<div class="c hd" style="left:893px;top:430px;width:38px;height:18px;padding-top:2px;"><i class="k">胜负</i></div>
<div class="c hd" style="left:932px;top:430px;width:38px;height:18px;padding-top:2px;"><i class="k">让球</i></div>
<div class="c hd" style="left:971px;top:430px;width:57px;height:18px;padding-top:2px;"><i class="k">进球数</i></div>
<div class="c" style="left:2px;top:449px;width:80px;height:25px;color:#fff;font-size:12px;"><i class="k">西乙</i></div>
<div class="c" style="left:83px;top:449px;width:77px;height:25px;">25-08-24</div>
<div class="c" style="left:161px;top:449px;width:113px;height:25px;color:#1e741e;"><i class="k">拉科鲁尼亚</i></div>
<div class="c" style="left:275px;top:449px;width:91px;height:25px;"><span class="red">0-0</span>(0-0)</div>
<div class="c" style="left:367px;top:449px;width:39px;height:25px;">2-6</div>
<div class="c" style="left:407px;top:449px;width:94px;height:25px;"><i class="k">布尔戈斯</i></div>
<div class="c" style="left:502px;top:449px;width:48px;height:25px;">0.90</div>
<div class="c" style="left:551px;top:449px;width:85px;height:25px;"><i class="k">半球</i></div>
<div class="c" style="left:637px;top:449px;width:52px;height:25px;">0.99</div>
<div class="c" style="left:690px;top:449px;width:66px;height:25px;">1.88</div>
<div class="c" style="left:757px;top:449px;width:66px;height:25px;">3.21</div>
<div class="c" style="left:824px;top:449px;width:68px;height:25px;">4.27</div>
<div class="c" style="left:893px;top:449px;width:38px;height:25px;color:#1a801a;"><i class="k">平</i></div>
<div class="c" style="left:932px;top:449px;width:38px;height:25px;color:#0000c0;"><i class="k">输</i></div>
<div class="c" style="left:971px;top:449px;width:57px;height:25px;color:#0000c0;"><i class="k">小</i></div>
<div class="c" style="left:2px;top:475px;width:80px;height:25px;color:#fff;font-size:12px;"><i class="k">西乙</i></div>
<div class="c" style="left:83px;top:475px;width:77px;height:25px;">25-08-17</div>
<div class="c" style="left:161px;top:475px;width:113px;height:25px;"><span style="background:#e00;color:#fff;padding:0 0.7px">1</span><i class="k">格拉纳达</i></div>
<div class="c" style="left:275px;top:475px;width:91px;height:25px;"><span class="red">1-3</span>(0-1)</div>
<div class="c" style="left:367px;top:475px;width:39px;height:25px;">7-1</div>
<div class="c" style="left:407px;top:475px;width:94px;height:25px;color:#1e741e;"><i class="k">拉科鲁尼亚</i></div>
<div class="c" style="left:502px;top:475px;width:48px;height:25px;">0.86</div>
<div class="c" style="left:551px;top:475px;width:85px;height:25px;"><i class="k">平手</i></div>
<div class="c" style="left:637px;top:475px;width:52px;height:25px;">1.03</div>
<div class="c" style="left:690px;top:475px;width:66px;height:25px;">2.53</div>
<div class="c" style="left:757px;top:475px;width:66px;height:25px;">2.97</div>
<div class="c" style="left:824px;top:475px;width:68px;height:25px;">2.87</div>
<div class="c" style="left:893px;top:475px;width:38px;height:25px;color:#e01010;"><i class="k">胜</i></div>
<div class="c" style="left:932px;top:475px;width:38px;height:25px;color:#e01010;"><i class="k">赢</i></div>
<div class="c" style="left:971px;top:475px;width:57px;height:25px;color:#e01010;"><i class="k">大</i></div>
<div class="c" style="left:2px;top:501px;width:80px;height:25px;color:#fff;font-size:12px;"><i class="k">球会友谊</i></div>
<div class="c" style="left:83px;top:501px;width:77px;height:25px;">25-08-10</div>
<div class="c" style="left:161px;top:501px;width:113px;height:25px;color:#1e741e;"><i class="k">拉科鲁尼亚</i></div>
<div class="c" style="left:275px;top:501px;width:91px;height:25px;"><span class="red">2-0</span>(0-0)</div>
<div class="c" style="left:367px;top:501px;width:39px;height:25px;">5-1</div>
<div class="c" style="left:407px;top:501px;width:94px;height:25px;"><i class="k">勒阿弗尔</i></div>
<div class="c" style="left:502px;top:501px;width:48px;height:25px;">0.79</div>
<div class="c" style="left:551px;top:501px;width:85px;height:25px;"><i class="k">平</i>/<i class="k">半</i></div>
<div class="c" style="left:637px;top:501px;width:52px;height:25px;">1.03</div>
<div class="c" style="left:690px;top:501px;width:66px;height:25px;">2.07</div>
<div class="c" style="left:757px;top:501px;width:66px;height:25px;">3.55</div>
<div class="c" style="left:824px;top:501px;width:68px;height:25px;">3.12</div>
<div class="c" style="left:893px;top:501px;width:38px;height:25px;color:#e01010;"><i class="k">胜</i></div>
<div class="c" style="left:932px;top:501px;width:38px;height:25px;color:#e01010;"><i class="k">赢</i></div>
<div class="c" style="left:971px;top:501px;width:57px;height:25px;color:#0000c0;"><i class="k">小</i></div>
<div class="c" style="left:2px;top:527px;width:80px;height:25px;color:#fff;font-size:12px;"><i class="k">球会友谊</i></div>
<div class="c" style="left:83px;top:527px;width:77px;height:25px;">25-08-07</div>
<div class="c" style="left:161px;top:527px;width:113px;height:25px;"><i class="k">皇家奥维耶多</i></div>
<div class="c" style="left:275px;top:527px;width:91px;height:25px;"><span class="red">1-2</span>(0-0)</div>
<div class="c" style="left:367px;top:527px;width:39px;height:25px;">4-7</div>
<div class="c" style="left:407px;top:527px;width:94px;height:25px;color:#1e741e;"><i class="k">拉科鲁尼亚</i></div>
<div class="c" style="left:893px;top:527px;width:38px;height:25px;color:#e01010;"><i class="k">胜</i></div>
<div class="c" style="left:2px;top:553px;width:80px;height:25px;color:#fff;font-size:12px;"><i class="k">球会友谊</i></div>
<div class="c" style="left:83px;top:553px;width:77px;height:25px;">25-08-02</div>
<div class="c" style="left:161px;top:553px;width:113px;height:25px;"><i class="k">米德尔斯堡</i></div>
<div class="c" style="left:275px;top:553px;width:91px;height:25px;"><span class="red">2-2</span>(1-1)</div>
<div class="c" style="left:367px;top:553px;width:39px;height:25px;">5-2</div>
<div class="c" style="left:407px;top:553px;width:94px;height:25px;color:#1e741e;"><i class="k">拉科鲁尼亚</i></div>
<div class="c" style="left:502px;top:553px;width:48px;height:25px;">0.74</div>
<div class="c" style="left:551px;top:553px;width:85px;height:25px;"><i class="k">平</i>/<i class="k">半</i></div>
<div class="c" style="left:637px;top:553px;width:52px;height:25px;">1.08</div>
<div class="c" style="left:690px;top:553px;width:66px;height:25px;">2.07</div>
<div class="c" style="left:757px;top:553px;width:66px;height:25px;">3.35</div>
<div class="c" style="left:824px;top:553px;width:68px;height:25px;">3.25</div>
<div class="c" style="left:893px;top:553px;width:38px;height:25px;color:#1a801a;"><i class="k">平</i></div>
<div class="c" style="left:932px;top:553px;width:38px;height:25px;color:#e01010;"><i class="k">赢</i></div>
<div class="c" style="left:971px;top:553px;width:57px;height:25px;color:#e01010;"><i class="k">大</i></div>
<div class="c" style="left:2px;top:579px;width:80px;height:25px;color:#fff;font-size:12px;"><i class="k">球会友谊</i></div>
<div class="c" style="left:83px;top:579px;width:77px;height:25px;">25-07-31</div>
<div class="c" style="left:161px;top:579px;width:113px;height:25px;"><i class="k">沃特福德</i></div>
<div class="c" style="left:275px;top:579px;width:91px;height:25px;"><span class="red">1-0</span>(1-0)</div>
<div class="c" style="left:367px;top:579px;width:39px;height:25px;">4-4</div>
<div class="c" style="left:407px;top:579px;width:94px;height:25px;color:#1e741e;"><i class="k">拉科鲁尼亚</i></div>
<div class="c" style="left:502px;top:579px;width:48px;height:25px;">0.88</div>
<div class="c" style="left:551px;top:579px;width:85px;height:25px;"><i class="k">平</i>/<i class="k">半</i></div>
<div class="c" style="left:637px;top:579px;width:52px;height:25px;">0.94</div>
<div class="c" style="left:690px;top:579px;width:66px;height:25px;">2.12</div>
<div class="c" style="left:757px;top:579px;width:66px;height:25px;">3.33</div>
<div class="c" style="left:824px;top:579px;width:68px;height:25px;">3.15</div>
<div class="c" style="left:893px;top:579px;width:38px;height:25px;color:#0000d0;"><i class="k">负</i></div>
<div class="c" style="left:932px;top:579px;width:38px;height:25px;color:#0000c0;"><i class="k">输</i></div>
<div class="c" style="left:971px;top:579px;width:57px;height:25px;color:#0000c0;"><i class="k">小</i></div>
<div class="c" style="left:2px;top:605px;width:80px;height:25px;color:#fff;font-size:12px;"><i class="k">球会友谊</i></div>
<div class="c" style="left:83px;top:605px;width:77px;height:25px;">25-07-27</div>
<div class="c" style="left:161px;top:605px;width:113px;height:25px;">UD<i class="k">欧云斯</i></div>
<div class="c" style="left:275px;top:605px;width:91px;height:25px;"><span class="red">0-2</span>(0-1)</div>
<div class="c" style="left:367px;top:605px;width:39px;height:25px;">3-2</div>
<div class="c" style="left:407px;top:605px;width:94px;height:25px;color:#1e741e;"><i class="k">拉科鲁尼亚</i></div>
<div class="c" style="left:690px;top:605px;width:66px;height:25px;">4.44</div>
<div class="c" style="left:757px;top:605px;width:66px;height:25px;">3.28</div>
<div class="c" style="left:824px;top:605px;width:68px;height:25px;">1.76</div>
<div class="c" style="left:893px;top:605px;width:38px;height:25px;color:#e01010;"><i class="k">胜</i></div>
<div class="c" style="left:2px;top:631px;width:80px;height:25px;color:#fff;font-size:12px;"><i class="k">球会友谊</i></div>
<div class="c" style="left:83px;top:631px;width:77px;height:25px;">25-07-24</div>
<div class="c" style="left:161px;top:631px;width:113px;height:25px;"><i class="k">甘普斯特拉</i></div>
<div class="c" style="left:275px;top:631px;width:91px;height:25px;"><span class="red">0-5</span>(0-2)</div>
<div class="c" style="left:367px;top:631px;width:39px;height:25px;">1-10</div>
<div class="c" style="left:407px;top:631px;width:94px;height:25px;color:#1e741e;"><i class="k">拉科鲁尼亚</i></div>
<div class="c" style="left:502px;top:631px;width:48px;height:25px;">0.85</div>
<div class="c" style="left:551px;top:631px;width:85px;height:25px;"><i class="k">受球半</i></div>
<div class="c" style="left:637px;top:631px;width:52px;height:25px;">0.97</div>
<div class="c" style="left:690px;top:631px;width:66px;height:25px;">7.81</div>
<div class="c" style="left:757px;top:631px;width:66px;height:25px;">4.71</div>
<div class="c" style="left:824px;top:631px;width:68px;height:25px;">1.31</div>
<div class="c" style="left:893px;top:631px;width:38px;height:25px;color:#e01010;"><i class="k">胜</i></div>
<div class="c" style="left:932px;top:631px;width:38px;height:25px;color:#e01010;"><i class="k">赢</i></div>
<div class="c" style="left:971px;top:631px;width:57px;height:25px;color:#e01010;"><i class="k">大</i></div>
<div class="c" style="left:2px;top:657px;width:80px;height:25px;color:#fff;font-size:12px;"><i class="k">西乙</i></div>
<div class="c" style="left:83px;top:657px;width:77px;height:25px;">25-06-02</div>
<div class="c" style="left:161px;top:657px;width:113px;height:25px;color:#1e741e;"><i class="k">拉科鲁尼亚</i></div>
<div class="c" style="left:275px;top:657px;width:91px;height:25px;"><span class="red">0-4</span>(0-3)</div>
<div class="c" style="left:367px;top:657px;width:39px;height:25px;">2-0</div>
<div class="c" style="left:407px;top:657px;width:94px;height:25px;"><i class="k">艾尔切</i></div>
<div class="c" style="left:502px;top:657px;width:48px;height:25px;">1.00</div>
<div class="c" style="left:551px;top:657px;width:85px;height:25px;"><i class="k">受半</i>/<i class="k">一</i></div>
<div class="c" style="left:637px;top:657px;width:52px;height:25px;">0.89</div>
<div class="c" style="left:690px;top:657px;width:66px;height:25px;">5.24</div>
<div class="c" style="left:757px;top:657px;width:66px;height:25px;">3.67</div>
<div class="c" style="left:824px;top:657px;width:68px;height:25px;">1.62</div>
<div class="c" style="left:893px;top:657px;width:38px;height:25px;color:#0000d0;"><i class="k">负</i></div>
<div class="c" style="left:932px;top:657px;width:38px;height:25px;color:#0000c0;"><i class="k">输</i></div>
<div class="c" style="left:971px;top:657px;width:57px;height:25px;color:#e01010;"><i class="k">大</i></div>
<div class="c" style="left:2px;top:683px;width:80px;height:25px;color:#fff;font-size:12px;"><i class="k">西乙</i></div>
<div class="c" style="left:83px;top:683px;width:77px;height:25px;">25-05-26</div>
<div class="c" style="left:161px;top:683px;width:113px;height:25px;"><i class="k">萨拉戈萨</i></div>
<div class="c" style="left:275px;top:683px;width:91px;height:25px;"><span class="red">1-0</span>(0-0)</div>
<div class="c" style="left:367px;top:683px;width:39px;height:25px;">4-6</div>
<div class="c" style="left:407px;top:683px;width:94px;height:25px;color:#1e741e;"><i class="k">拉科鲁尼亚</i></div>
<div class="c" style="left:502px;top:683px;width:48px;height:25px;">1.01</div>
<div class="c" style="left:551px;top:683px;width:85px;height:25px;"><i class="k">一球</i></div>
<div class="c" style="left:637px;top:683px;width:52px;height:25px;">0.88</div>
<div class="c" style="left:690px;top:683px;width:66px;height:25px;">1.61</div>
<div class="c" style="left:757px;top:683px;width:66px;height:25px;">3.84</div>
<div class="c" style="left:824px;top:683px;width:68px;height:25px;">5.10</div>
<div class="c" style="left:893px;top:683px;width:38px;height:25px;color:#0000d0;"><i class="k">负</i></div>
<div class="c" style="left:932px;top:683px;width:38px;height:25px;color:#1a801a;"><i class="k">走</i></div>
<div class="c" style="left:971px;top:683px;width:57px;height:25px;color:#0000c0;"><i class="k">小</i></div>
<div class="c" style="left:2px;top:709px;width:1026px;height:25px;"><span style="white-space:pre;letter-spacing:0.16px"><i class="k">近</i><span class="fr">10</span><i class="k">场</i>,<i class="k">胜</i>5<i class="k">平</i>2<i class="k">负</i>3, <i class="k">胜率</i>:<span class="fr">50%</span> <i class="k">让胜率</i>:<span class="fr">50%</span> <i class="k">大率</i>:<span class="fr">50%</span> <i class="k">单率</i>:<span class="fr">40%</span></span></div>
<div class="sel" style="left:535px;top:410px;width:58px;height:17px"></div>
<div class="t" style="left:540px;top:410px;height:19px;line-height:19px;font-size:13px;">Crow*</div>
<svg class="r" style="left:580px;top:416.5px" width="10" height="6" viewBox="0 0 10 6"><path d="M1 1 L5 5 L9 1" fill="none" stroke="#111" stroke-width="2.4"/></svg>
<div class="sel" style="left:604px;top:410px;width:49px;height:17px"></div>
<div class="t" style="left:609px;top:410px;height:19px;line-height:19px;font-size:13px;"><i class="k">终指</i></div>
<svg class="r" style="left:640px;top:416.5px" width="10" height="6" viewBox="0 0 10 6"><path d="M1 1 L5 5 L9 1" fill="none" stroke="#111" stroke-width="2.4"/></svg>
<div class="sel" style="left:726px;top:410px;width:68px;height:17px"></div>
<div class="t" style="left:731px;top:410px;height:19px;line-height:19px;font-size:13px;"><i class="k">平均值</i></div>
<svg class="r" style="left:781px;top:416.5px" width="10" height="6" viewBox="0 0 10 6"><path d="M1 1 L5 5 L9 1" fill="none" stroke="#111" stroke-width="2.4"/></svg>
<div class="sel" style="left:804px;top:410px;width:49px;height:17px"></div>
<div class="t" style="left:809px;top:410px;height:19px;line-height:19px;font-size:13px;"><i class="k">终指</i></div>
<svg class="r" style="left:840px;top:416.5px" width="10" height="6" viewBox="0 0 10 6"><path d="M1 1 L5 5 L9 1" fill="none" stroke="#111" stroke-width="2.4"/></svg>
<div class="sel" style="left:935px;top:410px;width:49px;height:17px"></div>
<div class="t" style="left:940px;top:410px;height:19px;line-height:19px;font-size:13px;"><i class="k">全场</i></div>
<svg class="r" style="left:971px;top:416.5px" width="10" height="6" viewBox="0 0 10 6"><path d="M1 1 L5 5 L9 1" fill="none" stroke="#111" stroke-width="2.4"/></svg>
<div class="r" style="left:1px;top:33px;width:1028px;height:1px;background:#e6e6fb;"></div>
</body></html>
